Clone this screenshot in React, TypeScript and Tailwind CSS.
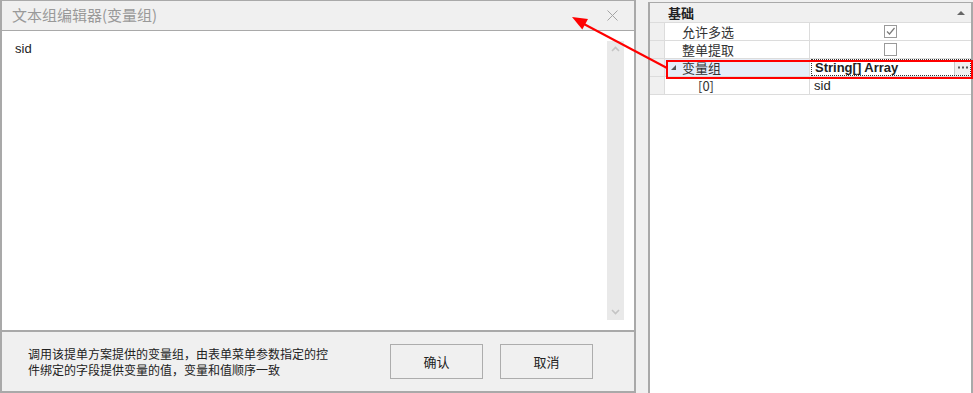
import React from 'react';

const CJK = { fontFamily: '"Noto Sans CJK SC", "Noto Sans", sans-serif' };
const LATIN = { fontFamily: '"Liberation Sans", "Noto Sans CJK SC", sans-serif' };

function Chevron({ up }: { up?: boolean }) {
  return (
    <svg width="9" height="6" viewBox="0 0 9 6">
      <path d={up ? 'M1 5 L4.5 1.5 L8 5' : 'M1 1 L4.5 4.5 L8 1'} fill="none" stroke="#c4c4c4" strokeWidth="1.6" />
    </svg>
  );
}

function Check({ checked }: { checked?: boolean }) {
  return (
    <div className="w-[13px] h-[13px] border border-[#9a9a9a] bg-white flex items-center justify-center">
      {checked && (
        <svg width="11" height="11" viewBox="0 0 11 11">
          <path d="M2 5.5 L4.5 8 L9.5 2" fill="none" stroke="#7a7a7a" strokeWidth="1.2" />
        </svg>
      )}
    </div>
  );
}

function PropRow({ name, indent, children, selected, expander }: {
  name: string; indent?: boolean; children?: React.ReactNode; selected?: boolean; expander?: boolean;
}) {
  return (
    <div className="flex h-[18px] border-b border-[#dcdcdc]">
      <div className="w-[15px] bg-[#f0f0f0] border-r border-[#dcdcdc]" />
      <div className={`w-[145px] flex items-center border-r border-[#dcdcdc] text-[13px] text-[#333] ${selected ? 'bg-[#e5eef9]' : 'bg-white'}`} style={CJK}>
        <div className="w-[17px] flex justify-center">
          {expander && (
            <svg width="7" height="7" viewBox="0 0 7 7">
              <path d="M6 1 L6 6 L1 6 Z" fill="#555" />
            </svg>
          )}
        </div>
        <span className={indent ? 'pl-[16px]' : ''}>{name}</span>
      </div>
      <div className="flex-1 bg-white flex items-center">{children}</div>
    </div>
  );
}

export default function App() {
  return (
    <div className="relative w-[973px] h-[393px] bg-[#f0f0f0] flex overflow-hidden">
      {/* Dialog */}
      <div className="w-[636px] h-[393px] flex flex-col border-t border-x-2 border-b-2 border-[#a9a9a9]">
        <div className="h-[30px] flex items-center justify-between pl-[10px] pr-[16px] bg-[#f0f0f0] border-b border-[#a9a9a9]">
          <span className="text-[15px] text-[#999]" style={CJK}>文本组编辑器(变量组)</span>
          <svg width="11" height="11" viewBox="0 0 11 11">
            <path d="M0.5 0.5 L10.5 10.5 M10.5 0.5 L0.5 10.5" stroke="#a4a4a4" strokeWidth="1" />
          </svg>
        </div>
        <div className="h-[301px] bg-white p-[10px] flex border-b-2 border-[#a9a9a9]">
          <div className="flex-1 pl-[3px] text-[13px] leading-[16px] text-[#222]" style={LATIN}>sid</div>
          <div className="w-[17px] bg-[#e9e9e9] flex flex-col items-center justify-between py-[5px]">
            <Chevron up />
            <Chevron />
          </div>
        </div>
        <div className="flex-1 flex items-center justify-between pl-[26px] pr-[41px]">
          <p className="text-[12px] leading-[16px] text-[#222]" style={CJK}>
            调用该提单方案提供的变量组，由表单菜单参数指定的控<br />件绑定的字段提供变量的值，变量和值顺序一致
          </p>
          <div className="flex gap-[17px]">
            <button className="w-[93px] h-[35px] border border-[#adadad] bg-[#f0f0f0] text-[13px] text-[#222]" style={CJK}>确认</button>
            <button className="w-[93px] h-[35px] border border-[#adadad] bg-[#f0f0f0] text-[13px] text-[#222]" style={CJK}>取消</button>
          </div>
        </div>
      </div>

      {/* Property grid */}
      <div className="ml-[12px] flex-1 h-[393px] pt-[2px]">
        <div className="h-full border-t-[1px] border-x-2 border-[#a9a9a9] bg-white flex flex-col">
          <div className="h-[20px] bg-[#f0f0f0] flex items-center justify-between pl-[18px] pr-[6px] border-b border-[#dcdcdc]">
            <span className="text-[13px] font-bold text-[#222]" style={CJK}>基础</span>
            <svg width="8" height="5" viewBox="0 0 8 5">
              <path d="M0 5 L4 1 L8 5 Z" fill="#666" />
            </svg>
          </div>
          <PropRow name="允许多选">
            <div className="flex-1 flex justify-center"><Check checked /></div>
          </PropRow>
          <PropRow name="整单提取">
            <div className="flex-1 flex justify-center"><Check /></div>
          </PropRow>
          <PropRow name="变量组" selected expander>
            <div className="flex-1 h-full flex border border-dotted border-[#333] ml-[1px]">
              <span className="flex-1 pl-[3px] text-[13px] font-bold leading-[16px] text-[#222]" style={LATIN}>String[] Array</span>
              <div className="w-[16px] bg-[#f0f0f0] border-l border-[#c8c8c8] flex items-center justify-center">
                <svg width="10" height="3" viewBox="0 0 10 3">
                  <rect x="0" y="0.5" width="2" height="2" fill="#555" />
                  <rect x="4" y="0.5" width="2" height="2" fill="#555" />
                  <rect x="8" y="0.5" width="2" height="2" fill="#555" />
                </svg>
              </div>
            </div>
          </PropRow>
          <PropRow name="[0]" indent>
            <span className="pl-[4px] text-[13px] text-[#222]" style={LATIN}>sid</span>
          </PropRow>
          <div className="flex-1 bg-white" />
        </div>
      </div>

      {/* Annotation overlay */}
      <div className="absolute left-[666px] top-[60px] w-[307px] h-[19px] border-2 border-[#ff0000] pointer-events-none" />
      <svg className="absolute inset-0 pointer-events-none" width="973" height="393">
        <line x1="667" y1="68" x2="582" y2="23" stroke="#ff0000" strokeWidth="2" />
        <path d="M572 17 L588 18.9 L582.3 29.5 Z" fill="#ff0000" />
      </svg>
    </div>
  );
}
